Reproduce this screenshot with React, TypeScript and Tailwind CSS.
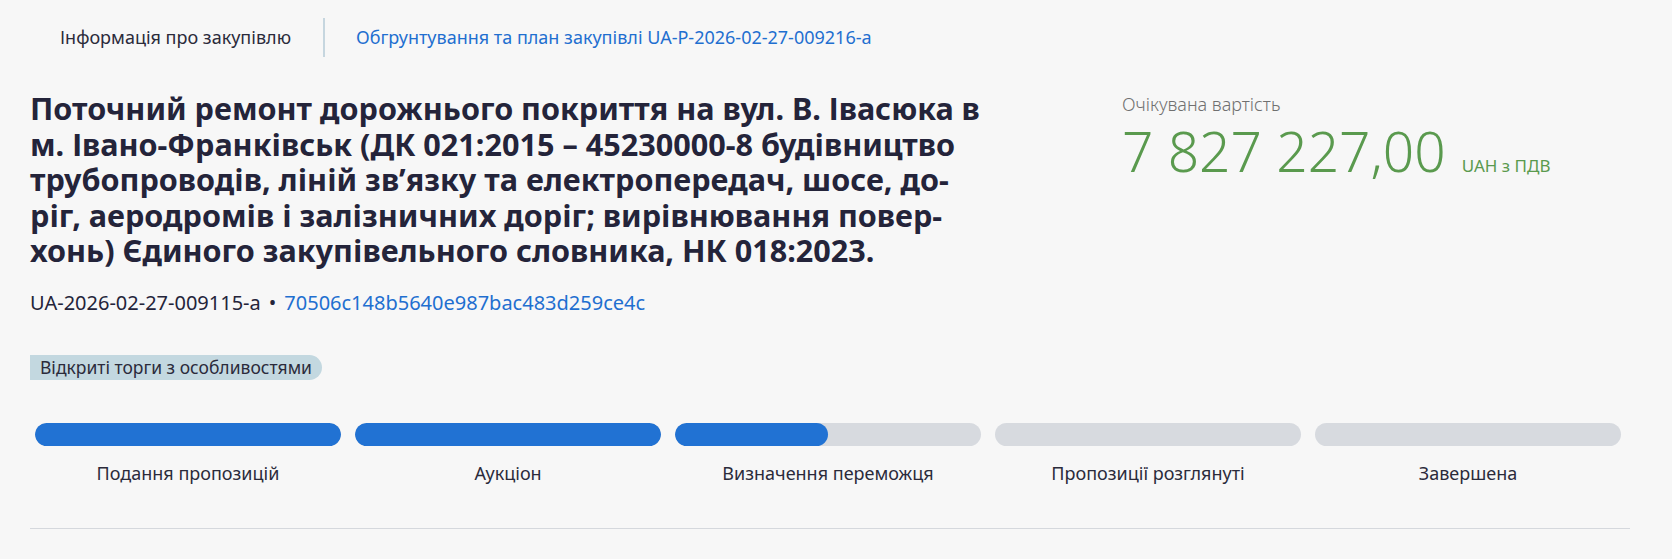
import React from "react";

const stages = [
  { label: "Подання пропозицій", fill: 100 },
  { label: "Аукціон", fill: 100 },
  { label: "Визначення переможця", fill: 50 },
  { label: "Пропозиції розглянуті", fill: 0 },
  { label: "Завершена", fill: 0 },
];

export default function App() {
  return (
    <div className="min-h-screen bg-[#f7f7f7] font-['Noto_Sans',sans-serif] text-[#24243a]">
      <div className="ml-[30px] w-[1600px]">
        <nav className="flex items-center pt-[18px]">
          <div className="pl-[30px] pr-[32px] text-[18px] leading-[27px] text-[#2b2b3b]">
            Інформація про закупівлю
          </div>
          <div className="h-[39px] w-[2px] bg-[#c6d6df]" />
          <a className="pl-[31px] text-[18px] leading-[27px] text-[#1f6fd0]" href="#">
            Обгрунтування та план закупівлі UA-P-2026-02-27-009216-a
          </a>
        </nav>

        <div className="mt-[34px] flex">
          <div className="w-[1000px] shrink-0">
            <h1 className="text-[30.6px] font-bold leading-[35.5px] text-[#24243a]">
              Поточний ремонт дорожнього покриття на вул. В. Івасюка в<br />
              м. Івано-Франківськ (ДК 021:2015 – 45230000-8 будівництво<br />
              трубопроводів, ліній зв’язку та електропередач, шосе, до-<br />
              ріг, аеродромів і залізничних доріг; вирівнювання повер-<br />
              хонь) Єдиного закупівельного словника, НК 018:2023.
            </h1>
            <div className="mt-[19px] flex items-center text-[20px] leading-[30px]">
              <span className="text-[#24243a]">UA-2026-02-27-009115-a</span>
              <span className="mx-[8px] text-[#24243a]">•</span>
              <a href="#" className="text-[#1f6fd0]">70506c148b5640e987bac483d259ce4c</a>
            </div>
            <div className="mt-[37px] flex">
              <span className="rounded-l-[6px] rounded-r-full bg-[#c3d8e0] px-[10px] text-[17.5px] leading-[25px] text-[#2b2b3b]">
                Відкриті торги з особливостями
              </span>
            </div>
          </div>
          <div className="ml-[92px]">
            <div className="text-[18px] font-light leading-[27px] text-[#707070]">Очікувана вартість</div>
            <div className="flex items-baseline">
              <span className="text-[55px] font-light leading-[66px] text-[#5a9a4e]">7 827 227,00</span>
              <span className="ml-[16px] text-[17px] text-[#5a9a4e]">UAH з ПДВ</span>
            </div>
          </div>
        </div>

        <div className="mt-[43px] flex gap-[14px] pl-[5px]">
          {stages.map((s) => (
            <div key={s.label} className="flex w-[306px] flex-col items-center">
              <div className="h-[23px] w-full overflow-hidden rounded-full bg-[#d7dadf]">
                <div className="h-full rounded-full bg-[#2172d3]" style={{ width: `${s.fill}%` }} />
              </div>
              <div className="mt-[14px] text-[18px] leading-[27px] text-[#2b2b3b]">{s.label}</div>
            </div>
          ))}
        </div>

        <div className="mt-[41px] h-px w-full bg-[#d5d8dd]" />
      </div>
    </div>
  );
}
